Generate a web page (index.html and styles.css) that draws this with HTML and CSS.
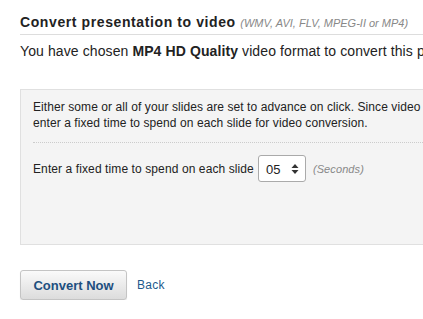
FILE: index.html
```html
<!DOCTYPE html>
<html>
<head>
<meta charset="utf-8">
<link rel="stylesheet" href="styles.css">
</head>
<body>
<div class="page">
  <h2 class="title">Convert presentation to video <span class="formats">(WMV, AVI, FLV, MPEG-II or MP4)</span></h2>
  <p class="chosen">You have chosen <b>MP4 HD Quality</b> video format to convert this presentation.</p>
  <div class="panel">
    <p class="note">Either some or all of your slides are set to advance on click. Since video cannot be clicked, please<br>enter a fixed time to spend on each slide for video conversion.</p>
    <div class="field">
      <span class="label">Enter a fixed time to spend on each slide</span>
      <div class="select">
        <span class="value">05</span>
        <svg class="arrows" width="8" height="12" viewBox="0 0 8 12"><path d="M4 1 L7.5 5 L0.5 5 Z M4 11 L7.5 7 L0.5 7 Z" fill="#333"/></svg>
      </div>
      <span class="unit">(Seconds)</span>
    </div>
  </div>
  <div class="actions">
    <button class="convert">Convert Now</button>
    <a class="back" href="#">Back</a>
  </div>
</div>
</body>
</html>
```
FILE: styles.css
```css
html, body {
  margin: 0;
  padding: 0;
  overflow: hidden;
  background: #fff;
}
.page {
  width: 700px;
  padding: 14px 0 0 20px;
  font-family: "Liberation Sans", Arial, sans-serif;
  color: #222;
}
.title {
  margin: 0;
  font-size: 14px;
  font-weight: bold;
  letter-spacing: 0.6px;
  color: #222;
  padding-bottom: 2px;
  border-bottom: 1px solid #ddd;
  line-height: 17px;
}
.formats {
  font-size: 11px;
  font-weight: normal;
  font-style: italic;
  letter-spacing: 0;
  color: #888;
}
.chosen {
  margin: 7px 0 0;
  font-size: 14px;
  line-height: 18px;
  letter-spacing: 0.1px;
}
.panel {
  margin-top: 29px;
  height: 156px;
  box-sizing: border-box;
  background: #f4f4f4;
  border: 1px solid #e0e0e0;
  padding: 9px 12px;
}
.note {
  margin: 0;
  font-size: 12px;
  line-height: 16px;
  letter-spacing: 0.08px;
  padding-bottom: 11px;
  border-bottom: 1px dotted #ccc;
}
.field {
  display: flex;
  align-items: center;
  margin-top: 12px;
  font-size: 12px;
  letter-spacing: 0.1px;
}
.select {
  margin-left: 4px;
  width: 48px;
  height: 27px;
  box-sizing: border-box;
  border: 1px solid #aaa;
  border-radius: 3px;
  background: #fff;
  display: flex;
  align-items: center;
  justify-content: space-between;
  padding: 0 6px 0 7px;
}
.value {
  font-size: 13px;
  padding-top: 2px;
}
.unit {
  margin-left: 7px;
  font-size: 11px;
  font-style: italic;
  color: #888;
}
.actions {
  margin-top: 25px;
  display: flex;
  align-items: center;
}
.convert {
  width: 107px;
  height: 30px;
  border: 1px solid #c4c4c4;
  border-radius: 3px;
  background: linear-gradient(#fafafa, #dcdcdc);
  box-shadow: 0 1px 1px rgba(0,0,0,0.1);
  font-family: "Liberation Sans", Arial, sans-serif;
  font-size: 13px;
  font-weight: bold;
  color: #1d4f7f;
  padding: 0;
}
.back {
  margin-left: 10px;
  font-size: 12px;
  color: #1d5a8c;
  text-decoration: none;
  letter-spacing: 0.3px;
}
```
